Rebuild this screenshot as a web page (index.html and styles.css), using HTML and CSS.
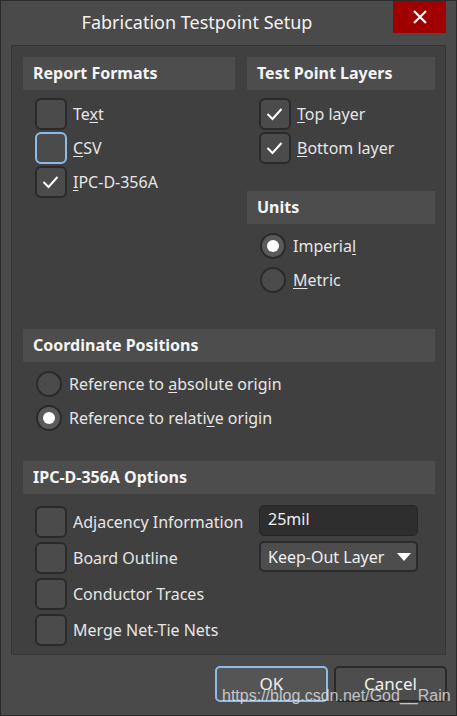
FILE: index.html
```html
<!DOCTYPE html>
<html>
<head>
<meta charset="utf-8">
<link rel="stylesheet" href="styles.css">
</head>
<body>
<div class="window">
  <div class="titlebar">
    <div class="title">Fabrication Testpoint Setup</div>
    <div class="close">
      <svg width="16" height="16" viewBox="0 0 16 16"><path d="M2 2 L14 14 M14 2 L2 14" stroke="#fff" stroke-width="2.2" fill="none"/></svg>
    </div>
  </div>
  <div class="panel">
    <div class="toprow">
      <section class="group">
        <div class="hdr">Report Formats</div>
        <div class="items">
          <div class="item"><span class="box"></span><span class="lbl">Te<u>x</u>t</span></div>
          <div class="item"><span class="box focus"></span><span class="lbl"><u>C</u>SV</span></div>
          <div class="item"><span class="box checked"><svg width="32" height="32" viewBox="0 0 32 32"><path d="M8.5 16 L13.5 21 L22.5 11" stroke="#fff" stroke-width="2" fill="none"/></svg></span><span class="lbl"><u>I</u>PC-D-356A</span></div>
        </div>
      </section>
      <section class="group">
        <div class="hdr">Test Point Layers</div>
        <div class="items">
          <div class="item"><span class="box checked"><svg width="32" height="32" viewBox="0 0 32 32"><path d="M8.5 16 L13.5 21 L22.5 11" stroke="#fff" stroke-width="2" fill="none"/></svg></span><span class="lbl"><u>T</u>op layer</span></div>
          <div class="item"><span class="box checked"><svg width="32" height="32" viewBox="0 0 32 32"><path d="M8.5 16 L13.5 21 L22.5 11" stroke="#fff" stroke-width="2" fill="none"/></svg></span><span class="lbl"><u>B</u>ottom layer</span></div>
        </div>
        <div class="hdr units">Units</div>
        <div class="items radios">
          <div class="item"><span class="radio on"></span><span class="lbl">Imperia<u>l</u></span></div>
          <div class="item"><span class="radio"></span><span class="lbl"><u>M</u>etric</span></div>
        </div>
      </section>
    </div>
    <section class="group coord">
      <div class="hdr">Coordinate Positions</div>
      <div class="items radios">
        <div class="item"><span class="radio"></span><span class="lbl">Reference to <u>a</u>bsolute origin</span></div>
        <div class="item"><span class="radio on"></span><span class="lbl">Reference to relati<u>v</u>e origin</span></div>
      </div>
    </section>
    <section class="group ipc">
      <div class="hdr">IPC-D-356A Options</div>
      <div class="opts">
        <div class="item"><span class="box"></span><span class="lbl">Adjacency Information</span></div>
        <div class="field"><div class="input">25mil</div></div>
        <div class="item"><span class="box"></span><span class="lbl">Board Outline</span></div>
        <div class="field"><div class="select"><span>Keep-Out Layer</span><svg width="14" height="8" viewBox="0 0 14 8"><path d="M0 0 H14 L7 8 Z" fill="#fff"/></svg></div></div>
        <div class="item"><span class="box"></span><span class="lbl">Conductor Traces</span></div>
        <div class="field"></div>
        <div class="item"><span class="box"></span><span class="lbl">Merge Net-Tie Nets</span></div>
        <div class="field"></div>
      </div>
    </section>
  </div>
  <div class="buttons">
    <div class="btn ok">OK</div>
    <div class="btn">Cancel</div>
  </div>
  <div class="watermark">https://blog.csdn.net/God__Rain</div>
</div>
</body>
</html>
```

FILE: styles.css
```css
* { box-sizing: border-box; }
html, body { margin: 0; padding: 0; background: #4a4a4a; }
body { font-family: "Noto Sans", "Open Sans", sans-serif; color: #e6e6e6; }

.window {
  position: relative;
  width: 457px;
  height: 716px;
  border: 1px solid #2a2a2a;
  background: #4a4a4a;
  overflow: hidden;
}

.titlebar {
  display: flex;
  align-items: flex-start;
  height: 44px;
}
.title {
  flex: 1;
  text-align: center;
  font-size: 18px;
  line-height: 22px;
  padding-top: 10px;
  color: #f2f2f2;
}
.close {
  width: 53px;
  height: 32px;
  margin-right: 10px;
  background: #a00000;
  display: flex;
  align-items: center;
  justify-content: center;
}

.panel {
  margin: 0 10px 0 10px;
  height: 610px;
  background: #404040;
  border: 1px solid #363636;
  padding: 11px 10px 0 11px;
  overflow: hidden;
}

.toprow {
  display: grid;
  grid-template-columns: 212px 1fr;
  column-gap: 12px;
}

.hdr {
  height: 33px;
  background: #4d4d4d;
  font-weight: bold;
  font-size: 16px;
  line-height: 33px;
  padding-left: 10px;
  color: #f4f4f4;
}
.hdr.units { margin-top: 26px; }

.items {
  margin-top: 7px;
  padding-left: 12px;
}
.item {
  display: flex;
  align-items: center;
  height: 34px;
}
.lbl {
  font-size: 16px;
  margin-left: 6px;
  white-space: nowrap;
}
.lbl u { text-decoration-thickness: 1px; text-underline-offset: 2px; }

.box {
  width: 32px;
  height: 32px;
  flex: none;
  border: 2px solid #2a2a2a;
  border-radius: 6px;
  background: #4b4b4b;
  position: relative;
}
.box svg { position: absolute; left: -2px; top: -2px; }
.box.focus { border-color: #8dbcec; }

.radios { margin-top: 5px; padding-left: 13px; }
.radio {
  width: 26px;
  height: 26px;
  flex: none;
  border-radius: 50%;
  border: 2px solid #2a2a2a;
  background: #4b4b4b;
  display: flex;
  align-items: center;
  justify-content: center;
}
.radio.on { background: #5a5a5a; }
.radio.on::after {
  content: "";
  width: 12px;
  height: 12px;
  border-radius: 50%;
  background: #ffffff;
}
.radios .lbl { margin-left: 7px; }

.coord { margin-top: 32px; }
.ipc { margin-top: 26px; }

.opts {
  margin-top: 10px;
  padding-left: 12px;
  display: grid;
  grid-template-columns: 224px 159px;
  grid-auto-rows: 36px;
}
.opts .item { height: 36px; }
.field { display: flex; align-items: center; }
.input {
  width: 159px;
  height: 31px;
  background: #2e2e2e;
  border: 1px solid #262626;
  border-radius: 5px;
  font-size: 16px;
  line-height: 27px;
  padding-left: 8px;
  margin-top: -3px;
  color: #f0f0f0;
}
.select {
  width: 159px;
  height: 31px;
  background: #4d4d4d;
  border: 2px solid #2b2b2b;
  border-radius: 5px;
  font-size: 16px;
  padding: 0 5px 0 7px;
  display: flex;
  align-items: center;
  justify-content: space-between;
  margin-top: -3px;
  color: #f0f0f0;
}

.buttons {
  display: flex;
  justify-content: flex-end;
  gap: 6px;
  margin-top: 11px;
  padding-right: 9px;
}
.btn {
  width: 113px;
  height: 36px;
  border: 2px solid #2a2a2a;
  border-radius: 5px;
  background: #4d4d4d;
  font-size: 17px;
  line-height: 32px;
  text-align: center;
  color: #f0f0f0;
}
.btn.ok { border-color: #8dbcec; background: #555555; }

.watermark {
  position: absolute;
  left: 221px;
  top: 686px;
  font-family: "Liberation Sans", Arial, sans-serif;
  font-size: 16px;
  line-height: 18px;
  color: rgba(235, 235, 235, 0.75);
  white-space: nowrap;
}
```
